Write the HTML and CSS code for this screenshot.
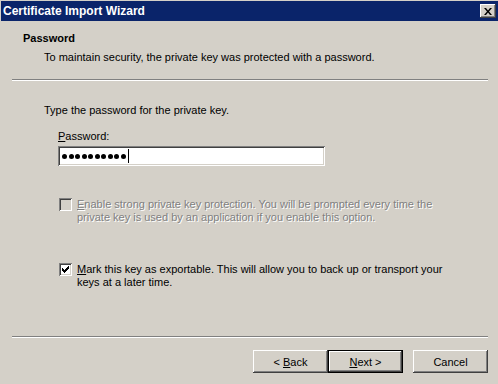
FILE: index.html
```html
<!DOCTYPE html>
<html lang="en">
  <head>
    <meta charset="UTF-8" />
    <title>Certificate Import Wizard</title>
    <link rel="stylesheet" href="styles.css">
  </head>
  <body>
    <div class="window">
      <div class="titlebar">
        <span class="title">Certificate Import Wizard</span>
        <button class="close-button" aria-label="Close">
          <svg viewBox="0 0 8 7" width="8" height="7">
            <path d="M0 0h2l2 2.5L6 0h2L5 3.5 8 7H6L4 4.5 2 7H0l3-3.5z" fill="#000"></path>
          </svg>
        </button>
      </div>

      <div class="header">
        <h1>Password</h1>
        <p>To maintain security, the private key was protected with a password.</p>
      </div>
      <div class="separator"></div>

      <div class="content">
        <p>Type the password for the private key.</p>
        <div class="field">
          <label><u>P</u>assword:</label>
          <div class="password-input">
            <span class="dot"></span><span class="dot"></span><span class="dot"></span><span class="dot"></span><span class="dot"></span>
            <span class="dot"></span><span class="dot"></span><span class="dot"></span><span class="dot"></span><span class="dot"></span>
            <span class="caret"></span>
          </div>
        </div>

        <div class="check-row disabled">
          <span class="checkbox"></span>
          <span class="check-label"><u>E</u>nable strong private key protection. You will be prompted every time the<br>private key is used by an application if you enable this option.</span>
        </div>

        <div class="check-row second">
          <span class="checkbox checked">
            <svg viewBox="0 0 7 7" width="7" height="7">
              <path d="M0 2h1v1h1v1h1V3h1V2h1V1h1V0h1v3H6v1H5v1H4v1H3v1H2V6H1V5H0z" fill="#000"></path>
            </svg>
          </span>
          <span class="check-label"><u>M</u>ark this key as exportable. This will allow you to back up or transport your<br>keys at a later time.</span>
        </div>
      </div>

      <div class="separator bottom"></div>
      <div class="buttons">
        <button class="btn">&lt; <u>B</u>ack</button>
        <button class="btn default"><u>N</u>ext &gt;</button>
        <button class="btn cancel">Cancel</button>
      </div>
    </div>
  </body>
</html>
```

FILE: styles.css
```css
/* base */
* {
  box-sizing: border-box;
}
body {
  margin: 0;
  background: #d4d0c8;
  font-family: "Liberation Sans", Arial, sans-serif;
  font-size: 11px;
  line-height: 13px;
  color: #000;
}
.window {
  width: 498px;
  height: 384px;
  padding: 1px 0 0 1px;
  overflow: hidden;
}
/* title bar */
.titlebar {
  height: 20px;
  background: #0a246a;
  display: flex;
  align-items: center;
  justify-content: space-between;
  padding: 0 2px 0 2px;
}
.title {
  color: #fff;
  font-weight: bold;
  font-size: 12px;
}
.close-button {
  width: 16px;
  height: 14px;
  padding: 0;
  border: 0;
  background: #d4d0c8;
  display: flex;
  align-items: center;
  justify-content: center;
  box-shadow: inset -1px -1px #404040, inset 1px 1px #fff,
    inset -2px -2px #808080, inset 2px 2px #d4d0c8;
}
.close-button svg {
  display: block;
}
/* header */
.header {
  padding: 11px 0 15px 22px;
}
.header h1 {
  margin: 0;
  font-size: 11px;
  font-weight: bold;
}
.header p {
  margin: 6px 0 0 21px;
}
.separator {
  margin-left: 11px;
  width: 476px;
  border-top: 1px solid #808080;
  border-bottom: 1px solid #fff;
}
/* content */
.content {
  padding: 23px 0 0 43px;
}
.content p {
  margin: 0;
}
.field {
  margin-top: 13px;
  padding-left: 14px;
}
.field label {
  display: block;
}
.password-input {
  margin-top: 3px;
  width: 267px;
  height: 20px;
  background: #fff;
  display: flex;
  align-items: center;
  gap: 1.5px;
  padding-left: 4px;
  box-shadow: inset 1px 1px #808080, inset -1px -1px #fff,
    inset 2px 2px #404040, inset -2px -2px #d4d0c8;
}
.dot {
  width: 5px;
  height: 5px;
  border-radius: 50%;
  background: #000;
}
.caret {
  width: 1px;
  height: 14px;
  background: #000;
  margin-left: 0.5px;
}
/* checkboxes */
.check-row {
  display: flex;
  align-items: flex-start;
  margin-top: 32px;
  padding-left: 15px;
}
.check-row.second {
  margin-top: 39px;
}
.checkbox {
  flex: none;
  width: 13px;
  height: 13px;
  margin-right: 5px;
  background: #fff;
  display: flex;
  align-items: center;
  justify-content: center;
  box-shadow: inset 1px 1px #808080, inset -1px -1px #fff,
    inset 2px 2px #404040, inset -2px -2px #d4d0c8;
}
.disabled .checkbox {
  background: #d4d0c8;
}
.disabled .check-label {
  color: #808080;
  text-shadow: 1px 1px 0 #fff;
}
/* footer buttons */
.separator.bottom {
  margin-top: 47px;
}
.buttons {
  display: flex;
  justify-content: flex-end;
  padding: 12px 10px 0 0;
}
.btn {
  width: 75px;
  height: 23px;
  padding: 0;
  border: 0;
  background: #d4d0c8;
  font-family: "Liberation Sans", Arial, sans-serif;
  font-size: 11px;
  color: #000;
  box-shadow: inset -1px -1px #404040, inset 1px 1px #fff,
    inset -2px -2px #808080, inset 2px 2px #d4d0c8;
}
.btn.default {
  box-shadow: inset 0 0 0 1px #000, inset -2px -2px #404040,
    inset 2px 2px #fff, inset -3px -3px #808080;
}
.btn.cancel {
  margin-left: 10px;
}
```
